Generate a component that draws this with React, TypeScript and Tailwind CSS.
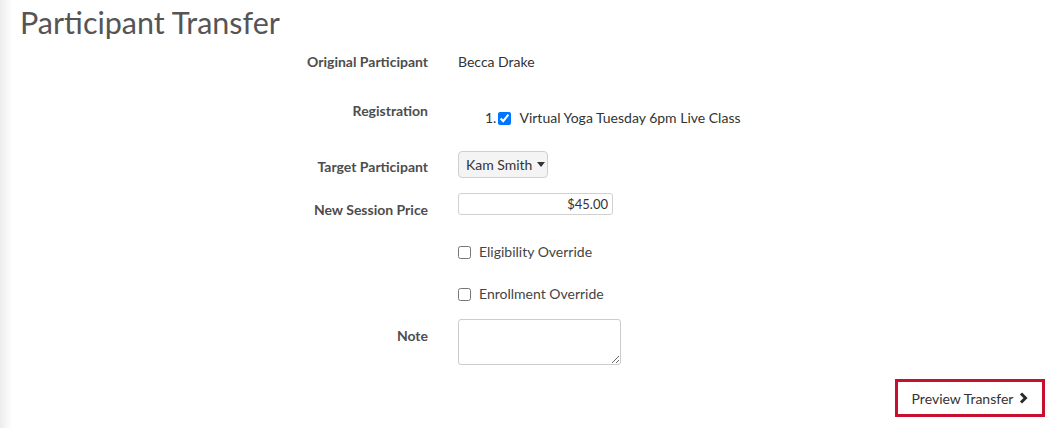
import React from 'react';

const Label: React.FC<{ children: React.ReactNode; className?: string }> = ({ children, className = '' }) => (
  <div className={`text-right font-bold text-[14px] leading-5 text-[#4d4d4d] ${className}`}>{children}</div>
);

export default function App() {
  return (
    <div
      className="w-[1048px] h-[428px] overflow-hidden bg-[linear-gradient(to_right,#ececec,#ffffff_12px)] text-[#333]"
      style={{ fontFamily: 'Lato, "Open Sans", sans-serif' }}
    >
      <h1 className="pl-[20px] pt-[1px] text-[30.5px] leading-[42px] font-normal text-[#555]">Participant Transfer</h1>

      <div className="flex flex-col">
        {/* Original participant */}
        <div className="grid grid-cols-[428px_1fr] gap-x-[30px] mt-[9px]">
          <Label>Original Participant</Label>
          <div className="text-[14px] leading-5">Becca Drake</div>
        </div>

        {/* Registration */}
        <div className="grid grid-cols-[428px_1fr] gap-x-[30px] mt-[29px]">
          <Label>Registration</Label>
          <div className="pt-[7px] pl-[27px] flex items-center text-[14px] leading-5">
            <span>1.</span>
            <input type="checkbox" defaultChecked className="ml-[2px] w-[13px] h-[13px] accent-[#0075ff]" />
            <span className="ml-[8px]">Virtual Yoga Tuesday 6pm Live Class</span>
          </div>
        </div>

        {/* Target participant */}
        <div className="grid grid-cols-[428px_1fr] gap-x-[30px] mt-[23px]">
          <Label className="pt-[6px]">Target Participant</Label>
          <div>
            <button className="h-[27px] w-[90px] flex items-center gap-[5px] pl-[7px] rounded-[4px] border border-[#cfcfcf] bg-[#f4f4f4] text-[14px] text-[#333]">
              <span>Kam Smith</span>
              <svg width="8" height="5" viewBox="0 0 8 5"><path d="M0 0h8L4 5z" fill="#333" /></svg>
            </button>
          </div>
        </div>

        {/* New session price */}
        <div className="grid grid-cols-[428px_1fr] gap-x-[30px] mt-[13px]">
          <Label className="pt-[9px]">New Session Price</Label>
          <div>
            <input
              defaultValue="$45.00"
              className="h-[22px] w-[155px] rounded-[3px] border border-[#d0d0d0] px-[4px] text-right text-[13px] text-[#333] outline-none"
            />
          </div>
        </div>

        {/* Eligibility override */}
        <div className="grid grid-cols-[428px_1fr] gap-x-[30px] mt-[22px]">
          <div />
          <label className="flex items-center gap-[8px] text-[14px] leading-5 text-[#444]">
            <input type="checkbox" className="w-[13px] h-[13px]" />
            Eligibility Override
          </label>
        </div>

        {/* Enrollment override */}
        <div className="grid grid-cols-[428px_1fr] gap-x-[30px] mt-[22px]">
          <div />
          <label className="flex items-center gap-[8px] text-[14px] leading-5 text-[#444]">
            <input type="checkbox" className="w-[13px] h-[13px]" />
            Enrollment Override
          </label>
        </div>

        {/* Note */}
        <div className="grid grid-cols-[428px_1fr] gap-x-[30px] mt-[15px]">
          <Label className="pt-[7px]">Note</Label>
          <div>
            <textarea className="block h-[46px] w-[163px] rounded-[3px] border border-[#cccccc] text-[13px] outline-none" />
          </div>
        </div>

        {/* Preview */}
        <div className="flex justify-end pr-[3px] mt-[14px]">
          <button className="h-[38px] w-[150px] flex items-center justify-center gap-[6px] border-[3px] border-[#c8102e] bg-white text-[14px] text-[#333]">
            <span>Preview Transfer</span>
            <svg width="9" height="12" viewBox="0 0 9 12">
              <path d="M2 1.5L6.5 6L2 10.5" fill="none" stroke="#2a2a2a" strokeWidth="3" strokeLinejoin="miter" />
            </svg>
          </button>
        </div>
      </div>
    </div>
  );
}
